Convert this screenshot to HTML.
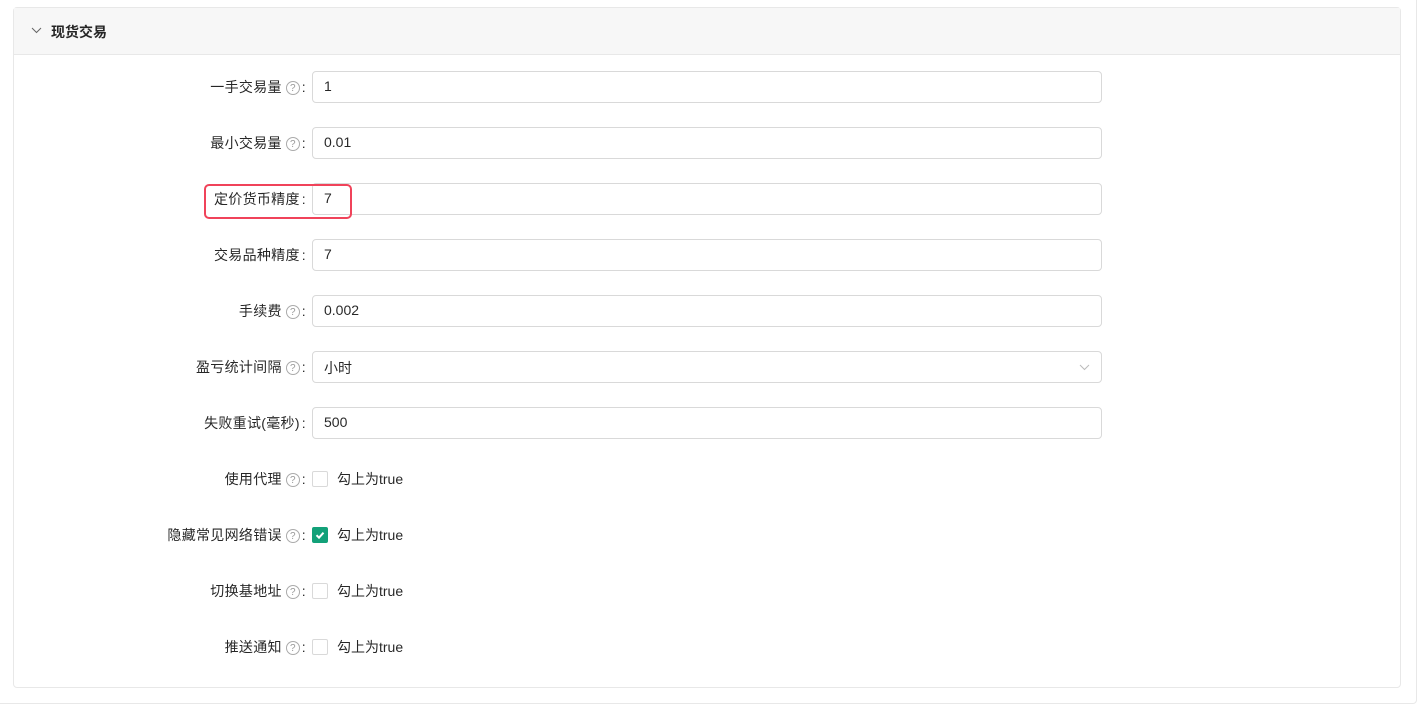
<!DOCTYPE html>
<html><head><meta charset="utf-8"><style>
body{margin:0;background:#fff;font-family:"Liberation Sans","Noto Sans CJK SC",sans-serif;font-size:14px;color:rgba(0,0,0,.85);width:1426px;height:710px;overflow:hidden;position:relative}
.outer{position:absolute;left:-10px;top:-10px;width:1427px;height:714px;border:1px solid #e8e8e8;border-radius:4px;box-sizing:border-box}
.panel{position:absolute;left:13px;top:7px;width:1388px;height:681px;border:1px solid #e8e8e8;border-radius:4px;box-sizing:border-box}
.hd{height:47px;background:#f7f7f7;border-bottom:1px solid #e8e8e8;box-sizing:border-box;position:relative}
.hd span{position:absolute;left:37px;top:14px;font-weight:bold;font-size:14px}
.hd svg{position:absolute;left:17px;top:19px}
.row{position:absolute;left:0;width:1426px;height:32px}
.lab{position:absolute;right:1114px;top:6px;white-space:nowrap;text-align:right;letter-spacing:0.3px}
.lab i{font-style:normal;margin:0 6px 0 2px}
.q{display:inline-block;width:14px;height:14px;border:1px solid #aaa;border-radius:50%;font-size:10px;line-height:13px;text-align:center;color:#999;margin:0 0 0 4px;vertical-align:1px;box-sizing:border-box;letter-spacing:0}
.inp{position:absolute;left:312px;top:0;width:790px;height:32px;border:1px solid #d9d9d9;border-radius:4px;box-sizing:border-box;padding:6px 11px}
.cb{position:absolute;left:312px;top:8px;width:16px;height:16px;border:1px solid #d9d9d9;border-radius:2px;box-sizing:border-box}
.cb.on{background:#12a179;border-color:#12a179}
.ct{position:absolute;left:337px;top:6px}
.red{position:absolute;left:204px;top:184px;width:148px;height:35px;border:2px solid #f0435a;border-radius:5px;box-sizing:border-box}
</style></head><body>
<div class="outer"></div>
<div class="panel"><div class="hd"><svg width="11" height="7" viewBox="0 0 11 7"><path d="M1 1l4.5 4.5L10 1" fill="none" stroke="#666" stroke-width="1"/></svg><span>现货交易</span></div></div>
<div class="row" style="top:71px"><div class="lab">一手交易量<span class="q">?</span><i>:</i></div><div class="inp">1</div></div>
<div class="row" style="top:127px"><div class="lab">最小交易量<span class="q">?</span><i>:</i></div><div class="inp">0.01</div></div>
<div class="row" style="top:183px"><div class="lab">定价货币精度<i>:</i></div><div class="inp">7</div></div>
<div class="row" style="top:239px"><div class="lab">交易品种精度<i>:</i></div><div class="inp">7</div></div>
<div class="row" style="top:295px"><div class="lab">手续费<span class="q">?</span><i>:</i></div><div class="inp">0.002</div></div>
<div class="row" style="top:351px"><div class="lab">盈亏统计间隔<span class="q">?</span><i>:</i></div><div class="inp">小时<svg style="position:absolute;right:11px;top:12px" width="11" height="7" viewBox="0 0 11 7"><path d="M1 1l4.5 4.5L10 1" fill="none" stroke="#bbb" stroke-width="1"/></svg></div></div>
<div class="row" style="top:407px"><div class="lab">失败重试(毫秒)<i>:</i></div><div class="inp">500</div></div>
<div class="row" style="top:463px"><div class="lab">使用代理<span class="q">?</span><i>:</i></div><div class="cb"></div><div class="ct">勾上为true</div></div>
<div class="row" style="top:519px"><div class="lab">隐藏常见网络错误<span class="q">?</span><i>:</i></div><div class="cb on"><svg width="14" height="14" viewBox="0 0 14 14" style="position:absolute;left:0;top:0"><path d="M3.5 7.2l2.5 2.5 4.5-5" fill="none" stroke="#fff" stroke-width="2"/></svg></div><div class="ct">勾上为true</div></div>
<div class="row" style="top:575px"><div class="lab">切换基地址<span class="q">?</span><i>:</i></div><div class="cb"></div><div class="ct">勾上为true</div></div>
<div class="row" style="top:631px"><div class="lab">推送通知<span class="q">?</span><i>:</i></div><div class="cb"></div><div class="ct">勾上为true</div></div>
<div class="red"></div>
</body></html>
